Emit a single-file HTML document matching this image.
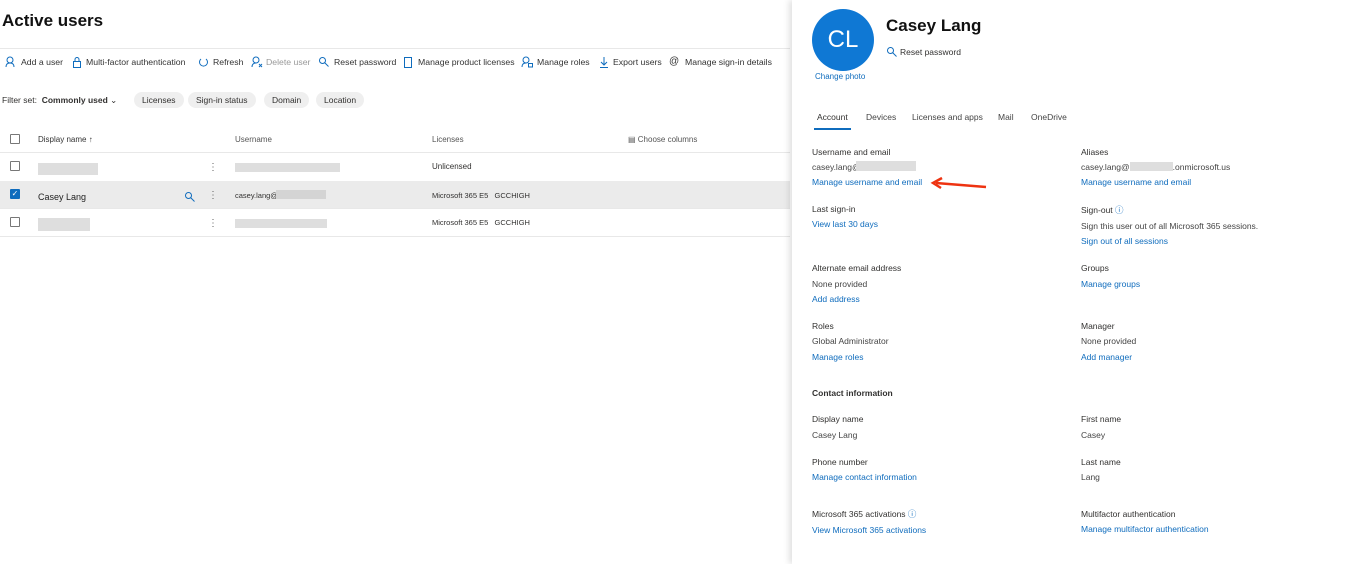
<!DOCTYPE html>
<html><head><meta charset="utf-8"><style>
*{margin:0;padding:0;box-sizing:border-box}
body{width:1366px;height:564px;overflow:hidden;background:#fff;font-family:"Liberation Sans",sans-serif;color:#323130;position:relative;font-size:9px}
.a{position:absolute;white-space:nowrap}
.blue{color:#0f6cbd}
.blur{position:absolute;background:#dedede;height:10px}
.pill{position:absolute;top:92px;height:16px;background:#efefef;border-radius:8px;font-size:8.5px;line-height:16px;padding:0 8px}
.cb{position:absolute;width:10px;height:10px;border:1px solid #777;border-radius:1px;background:#fff}
.line{position:absolute;left:0;width:790px;height:1px;background:#e8e8e8}
.lbl{font-size:8.5px;color:#323130}
.lnk{font-size:8.5px;color:#0f6cbd}
.txt{font-size:8.5px;color:#444}
.tb{position:absolute;top:57px;font-size:8.7px;color:#333;white-space:nowrap}
.ic{position:absolute;top:56px}
</style></head><body>
<div class="a" style="left:2px;top:11px;font-size:17px;font-weight:bold;color:#111">Active users</div>
<div class="line" style="top:48px"></div>
<svg class="ic" style="left:5px" width="11" height="12"><circle cx="5" cy="4" r="3" stroke="#0f6cbd" fill="none"/><path d="M1 11c0-3 2-4 4-4s4 1 4 4" stroke="#0f6cbd" fill="none"/></svg>
<div class="tb" style="left:21px">Add a user</div>
<svg class="ic" style="left:72px" width="10" height="12"><rect x="1.5" y="5.5" width="7" height="6" stroke="#0f6cbd" fill="none"/><path d="M3 5.5V3.5a2 2 0 0 1 4 0v2" stroke="#0f6cbd" fill="none"/></svg>
<div class="tb" style="left:86px">Multi-factor authentication</div>
<svg class="ic" style="left:198px" width="11" height="12"><path d="M8 3a4 4 0 1 1-5 0" stroke="#0f6cbd" fill="none"/></svg>
<div class="tb" style="left:213px">Refresh</div>
<svg class="ic" style="left:251px" width="12" height="12"><circle cx="5" cy="4" r="3" stroke="#0f6cbd" fill="none"/><path d="M1 11c0-3 2-4 4-4" stroke="#0f6cbd" fill="none"/><path d="M8 8l3 3M11 8l-3 3" stroke="#0f6cbd"/></svg>
<div class="tb" style="left:266px;color:#999">Delete user</div>
<svg class="ic" style="left:318px" width="12" height="12"><circle cx="4.5" cy="4.5" r="3" stroke="#0f6cbd" fill="none"/><path d="M6.5 6.5l4 4" stroke="#0f6cbd"/></svg>
<div class="tb" style="left:334px">Reset password</div>
<svg class="ic" style="left:403px" width="10" height="12"><rect x="1.5" y="1.5" width="7" height="10" stroke="#0f6cbd" fill="none"/></svg>
<div class="tb" style="left:418px">Manage product licenses</div>
<svg class="ic" style="left:521px" width="13" height="12"><circle cx="5" cy="4" r="3" stroke="#0f6cbd" fill="none"/><path d="M1 11c0-3 2-4 4-4" stroke="#0f6cbd" fill="none"/><rect x="7.5" y="7.5" width="4" height="3.5" stroke="#0f6cbd" fill="none"/></svg>
<div class="tb" style="left:537px">Manage roles</div>
<svg class="ic" style="left:599px" width="10" height="12"><path d="M5 1v8M2 6l3 3 3-3M1 11.5h8" stroke="#0f6cbd" fill="none"/></svg>
<div class="tb" style="left:613px">Export users</div>
<div class="tb blue" style="left:669px;font-size:10px;top:56px">@</div>
<div class="tb" style="left:685px">Manage sign-in details</div>
<div class="a" style="left:2px;top:95px;font-size:8.5px">Filter set: &nbsp;<b>Commonly used</b> &#8964;</div>
<div class="pill" style="left:134px">Licenses</div>
<div class="pill" style="left:188px">Sign-in status</div>
<div class="pill" style="left:264px">Domain</div>
<div class="pill" style="left:316px">Location</div>
<div class="cb" style="left:10px;top:134px"></div>
<div class="a" style="left:38px;top:135px;font-size:8px;color:#333">Display name ↑</div>
<div class="a" style="left:235px;top:135px;font-size:8px;color:#555">Username</div>
<div class="a" style="left:432px;top:135px;font-size:8px;color:#555">Licenses</div>
<div class="a" style="left:628px;top:135px;font-size:8px;color:#555">&#9636; Choose columns</div>
<div class="line" style="top:152px"></div>
<div class="cb" style="left:10px;top:161px"></div>
<div class="blur" style="left:38px;top:163px;width:60px;height:12px"></div>
<div class="a" style="left:208px;top:162px;font-size:10px;color:#666">⋮</div>
<div class="blur" style="left:235px;top:163px;width:105px;height:9px"></div>
<div class="a" style="left:432px;top:162px;font-size:8px">Unlicensed</div>
<div style="position:absolute;left:0;top:181px;width:790px;height:28px;background:#ebebeb"></div>
<div class="cb" style="left:10px;top:189px;background:#0f6cbd;border-color:#0f6cbd;color:#fff;font-size:8px;line-height:8px;text-align:center">✓</div>
<div class="a" style="left:38px;top:192px;font-size:9px;color:#222">Casey Lang</div>
<svg class="a" style="left:184px;top:191px" width="12" height="12"><circle cx="4.5" cy="4.5" r="3" stroke="#0f6cbd" fill="none"/><path d="M6.5 6.5l4 4" stroke="#0f6cbd"/></svg>
<div class="a" style="left:208px;top:190px;font-size:10px;color:#666">⋮</div>
<div class="a" style="left:235px;top:191px;font-size:7.5px">casey.lang@</div>
<div class="blur" style="left:276px;top:190px;width:50px;height:9px;background:#d4d4d4"></div>
<div class="a" style="left:432px;top:191px;font-size:7.5px">Microsoft 365 E5 &nbsp; GCCHIGH</div>
<div class="line" style="top:208px"></div>
<div class="cb" style="left:10px;top:217px"></div>
<div class="blur" style="left:38px;top:218px;width:52px;height:13px"></div>
<div class="a" style="left:208px;top:218px;font-size:10px;color:#666">⋮</div>
<div class="blur" style="left:235px;top:219px;width:92px;height:9px"></div>
<div class="a" style="left:432px;top:218px;font-size:7.5px">Microsoft 365 E5 &nbsp; GCCHIGH</div>
<div class="line" style="top:236px"></div>

<div style="position:absolute;left:792px;top:0;width:574px;height:564px;background:#fff;box-shadow:-3px 0 6px rgba(0,0,0,.12)"></div>
<div style="position:absolute;left:812px;top:9px;width:62px;height:62px;border-radius:50%;background:#0f78d4;color:#fff;font-size:24px;text-align:center;line-height:62px">CL</div>
<div class="a lnk" style="left:815px;top:72px;font-size:8px">Change photo</div>
<div class="a" style="left:886px;top:16px;font-size:17px;font-weight:bold;color:#111">Casey Lang</div>
<svg class="a" style="left:886px;top:46px" width="12" height="12"><circle cx="4.5" cy="4.5" r="3" stroke="#0f6cbd" fill="none"/><path d="M6.5 6.5l4 4" stroke="#0f6cbd"/></svg>
<div class="a" style="left:900px;top:47px;font-size:8.5px">Reset password</div>
<div class="a" style="left:817px;top:112px;font-size:8.5px">Account</div>
<div style="position:absolute;left:814px;top:128px;width:37px;height:2px;background:#0f6cbd"></div>
<div class="a" style="left:866px;top:112px;font-size:8.5px;color:#444">Devices</div>
<div class="a" style="left:912px;top:112px;font-size:8.5px;color:#444">Licenses and apps</div>
<div class="a" style="left:998px;top:112px;font-size:8.5px;color:#444">Mail</div>
<div class="a" style="left:1031px;top:112px;font-size:8.5px;color:#444">OneDrive</div>

<div class="a lbl" style="left:812px;top:147px">Username and email</div>
<div class="a txt" style="left:812px;top:162px">casey.lang@</div>
<div class="blur" style="left:856px;top:161px;width:60px"></div>
<div class="a lnk" style="left:812px;top:177px">Manage username and email</div>
<svg class="a" style="left:928px;top:176px" width="62" height="16"><path d="M58 11 L8 7" stroke="#e31" stroke-width="2.5" fill="none"/><path d="M14 2 L5 7 L13 12" stroke="#e31" stroke-width="2.5" fill="none"/></svg>
<div class="a lbl" style="left:1081px;top:147px">Aliases</div>
<div class="a txt" style="left:1081px;top:162px">casey.lang@<span style="display:inline-block;width:43px;height:9px;background:#dedede;vertical-align:-1px"></span>.onmicrosoft.us</div>
<div class="a lnk" style="left:1081px;top:177px">Manage username and email</div>

<div class="a lbl" style="left:812px;top:204px">Last sign-in</div>
<div class="a lnk" style="left:812px;top:219px">View last 30 days</div>
<div class="a lbl" style="left:1081px;top:204px">Sign-out <span class="blue">ⓘ</span></div>
<div class="a txt" style="left:1081px;top:221px">Sign this user out of all Microsoft 365 sessions.</div>
<div class="a lnk" style="left:1081px;top:236px">Sign out of all sessions</div>

<div class="a lbl" style="left:812px;top:263px">Alternate email address</div>
<div class="a txt" style="left:812px;top:279px">None provided</div>
<div class="a lnk" style="left:812px;top:294px">Add address</div>
<div class="a lbl" style="left:1081px;top:263px">Groups</div>
<div class="a lnk" style="left:1081px;top:279px">Manage groups</div>

<div class="a lbl" style="left:812px;top:321px">Roles</div>
<div class="a txt" style="left:812px;top:336px">Global Administrator</div>
<div class="a lnk" style="left:812px;top:352px">Manage roles</div>
<div class="a lbl" style="left:1081px;top:321px">Manager</div>
<div class="a txt" style="left:1081px;top:336px">None provided</div>
<div class="a lnk" style="left:1081px;top:352px">Add manager</div>

<div class="a lbl" style="left:812px;top:388px;font-weight:bold">Contact information</div>
<div class="a lbl" style="left:812px;top:414px">Display name</div>
<div class="a txt" style="left:812px;top:430px">Casey Lang</div>
<div class="a lbl" style="left:1081px;top:414px">First name</div>
<div class="a txt" style="left:1081px;top:430px">Casey</div>
<div class="a lbl" style="left:812px;top:457px">Phone number</div>
<div class="a lnk" style="left:812px;top:472px">Manage contact information</div>
<div class="a lbl" style="left:1081px;top:457px">Last name</div>
<div class="a txt" style="left:1081px;top:472px">Lang</div>
<div class="a lbl" style="left:812px;top:508px">Microsoft 365 activations <span class="blue">ⓘ</span></div>
<div class="a lnk" style="left:812px;top:525px">View Microsoft 365 activations</div>
<div class="a lbl" style="left:1081px;top:509px">Multifactor authentication</div>
<div class="a lnk" style="left:1081px;top:524px">Manage multifactor authentication</div>
</body></html>
